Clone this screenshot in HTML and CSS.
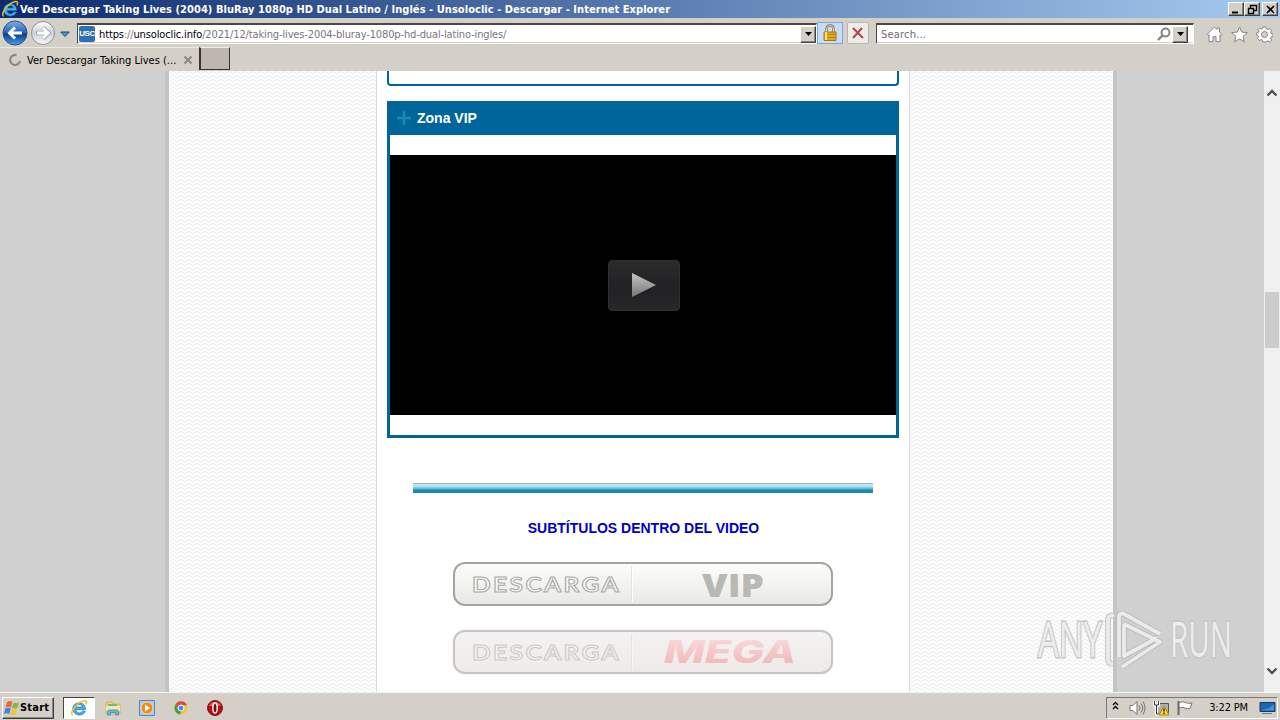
FILE: index.html
```html
<!DOCTYPE html>
<html lang="es">
<head>
  <meta charset="UTF-8">
  <title>Ver Descargar Taking Lives (2004) BluRay 1080p HD Dual Latino / Inglés</title>
  <link rel="stylesheet" href="styles.css">
</head>
<body>
  <svg class="defs" width="0" height="0">
    <defs>
      <linearGradient id="blue" x2="0" y2="1"><stop stop-color="#7db1e6"/><stop offset=".45" stop-color="#2b66bd"/><stop offset=".55" stop-color="#0d3d96"/><stop offset="1" stop-color="#42a5ec"/></linearGradient>
      <linearGradient id="glass" x2="0" y2="1"><stop stop-color="#fff"/><stop offset=".5" stop-color="#cbd2d9"/><stop offset="1" stop-color="#f8fafb"/></linearGradient>
      <linearGradient id="play" x2="0" y2="1"><stop stop-color="#c4c4c4"/><stop offset="1" stop-color="#777"/></linearGradient>
      <linearGradient id="red" x2="0" y2="1"><stop stop-color="#fbdfdf"/><stop offset="1" stop-color="#efb1b3"/></linearGradient>
      <symbol id="ie" viewBox="0 0 18 18">
        <path d="M15.500 10.500H6c.2 4 5.500 4.500 6.500 1.500h2.800C13.800 18 2.800 17.300 2.800 9.800 2.800 2 15.900 1.500 15.500 10.500zM6 8h6.300C12 4.600 6.500 4.600 6 8z" fill="#48afe9" stroke="#1c75bd" stroke-width=".7"/>
        <path d="M2.500 16.500C-1 14 7 3 14.500 1.500c2.500-.3 2.500 2 1.500 4" fill="none" stroke="#f2bd28" stroke-width="1.500"/>
      </symbol>
    </defs>
  </svg>

  <header class="titlebar">
    <svg width="18" height="18"><use href="#ie"/></svg>
    <span class="title">Ver Descargar Taking Lives (2004) BluRay 1080p HD Dual Latino / Inglés - Unsoloclic - Descargar - Internet Explorer</span>
    <div class="window-buttons">
      <span class="win"><svg width="15" height="13"><path d="M3 9.500h6" stroke="#000" stroke-width="2"/></svg></span>
      <span class="win"><svg width="15" height="13"><path d="M5.500 5V2.500h6v5H9M5 2.500h7M3.500 5.500h5v5h-5zM3 5.500h6" fill="none" stroke="#000" stroke-width="1.400"/></svg></span>
      <span class="win close"><svg width="15" height="13"><path d="M4 3l7 7M11 3l-7 7" stroke="#000" stroke-width="1.700"/></svg></span>
    </div>
  </header>

  <nav class="navbar">
    <svg class="arrows" width="56" height="28">
      <circle cx="15" cy="15" r="12" fill="url(#blue)" stroke="#30517f"/>
      <path d="M15 9.500L9.500 15l5.500 5.500M10 15h12" fill="none" stroke="#fff" stroke-width="3"/>
      <circle cx="43" cy="15" r="11.500" fill="url(#glass)" stroke="#8b929a"/>
      <path d="M43 9.500l5.500 5.500-5.500 5.500M49 15H36" fill="none" stroke="#a4abb2" stroke-width="4.500"/>
      <path d="M43 10l5 5-5 5M48 15H37" fill="none" stroke="#fff" stroke-width="3"/>
    </svg>
    <svg class="history" width="10" height="7"><path d="M.8 1h8.400L5 5.500z" fill="#3fa0cf" stroke="#174a72"/></svg>
    <div class="field address">
      <span class="favicon">USC</span>
      <span class="url">https<i>://</i>unsoloclic.info<i>/2021/12/taking-lives-2004-bluray-1080p-hd-dual-latino-ingles/</i></span>
      <span class="drop"><svg width="9" height="6"><path d="M1 1h7L4.500 5z"/></svg></span>
    </div>
    <span class="tool lock"><svg width="16" height="18"><path d="M4.500 9V5q0-3.500 3.500-3.500T11.500 5v4" fill="none" stroke="#83764f" stroke-width="2.400"/><path d="M4.500 9V5q0-3.500 3.500-3.500T11.500 5v4" fill="none" stroke="#ddd7b8"/><path d="M2 8h12v8.500H2z" fill="#e3a91a" stroke="#a97908"/><path d="M2 10.500h12M2 13.500h12" stroke="#b88411"/><path d="M4 8v8" stroke="#f9de79" stroke-width="2"/></svg></span>
    <span class="tool stop"><svg width="14" height="14"><path d="M2 2l10 10M11 2L2 12" stroke="#b2444b" stroke-width="2"/></svg></span>
    <div class="field search">
      <span class="placeholder">Search...</span>
      <svg width="14" height="15"><circle cx="8.500" cy="5.500" r="4" fill="#fff" stroke="#858585" stroke-width="2"/><path d="M5.500 8.500L1 13" stroke="#858585" stroke-width="2.400"/></svg>
      <span class="drop"><svg width="9" height="6"><path d="M1 1h7L4.500 5z"/></svg></span>
    </div>
    <div class="ie-tools">
      <svg width="17" height="17"><path d="M1 8.500L8.500 1 11 3.500V2h2.500v4L16 8.500l-1 1-1-.8v7H10v-5H7v5H3v-7l-1 .8z" fill="#fff" stroke="#868686"/></svg>
      <svg width="17" height="17"><path d="M8.500 1l2.200 5.100 5.600.5-4.200 3.700 1.300 5.500-4.900-2.900-4.900 2.900 1.300-5.500L.7 6.600l5.600-.5z" fill="#fff" stroke="#868686"/></svg>
      <svg width="17" height="17"><path d="M7 1h3l.5 2 1.300.6 1.900-1 1.800 1.900-1 1.800.5 1.300 2 .4v2.500l-2 .5-.5 1.200 1 1.800-1.800 1.900-1.900-1-1.300.6L10 16H7l-.5-2-1.300-.5-1.900 1-1.800-1.900 1-1.800L2 9.600l-1.500-.4V7L2.500 6.400 3 5.200l-1-1.600 1.500-1.500 1.800 1 1.200-.6z" fill="#fff" stroke="#858585"/><circle cx="8.500" cy="8.500" r="3" fill="#d4cfc7" stroke="#858585"/></svg>
    </div>
  </nav>

  <div class="tabs">
    <div class="tab">
      <svg width="14" height="14"><path d="M8.500 2.200A5 5 0 1 0 12 8" fill="none" stroke="#858585" stroke-width="2"/></svg>
      <span class="tab-title">Ver Descargar Taking Lives (...</span>
      <svg width="10" height="10"><path d="M1.500 1.500l7 7M8.500 1.500l-7 7" stroke="#8c8884" stroke-width="2"/></svg>
    </div>
    <div class="new-tab"></div>
  </div>

  <main class="viewport">
    <div class="page">
      <svg class="pattern" width="944" height="621">
        <pattern id="zigzag" width="8" height="4" patternUnits="userSpaceOnUse"><path d="M-1 4l1-1 4-3 4 3 1 1" fill="none" stroke="#ececec"/></pattern>
        <rect width="944" height="621" fill="url(#zigzag)"/>
      </svg>
      <div class="content">
        <div class="box-end"></div>
        <section class="vip">
          <h2><svg width="14" height="14"><path d="M7 0v14M0 7h14" stroke="#168bb6" stroke-width="2.600"/></svg>Zona VIP</h2>
          <div class="video">
            <span class="play"><svg width="26" height="26"><path d="M1 1l24 12L1 25z" fill="url(#play)"/></svg></span>
          </div>
        </section>
        <div class="divider"></div>
        <p class="subtitles">SUBTÍTULOS DENTRO DEL VIDEO</p>
        <a class="download">
          <svg width="379" height="42"><text class="outline" x="18" y="29" textLength="149" lengthAdjust="spacingAndGlyphs">DESCARGA</text><path d="M177.500 3v36" stroke="#e3e4de"/><path d="M178.500 3v36" stroke="#fff"/><text class="vip-text" x="248" y="34" textLength="62" lengthAdjust="spacingAndGlyphs">VIP</text></svg>
        </a>
        <a class="download mega">
          <svg width="379" height="42"><text class="outline" x="18" y="29" textLength="149" lengthAdjust="spacingAndGlyphs">DESCARGA</text><path d="M177.500 3v36" stroke="#e7e3e2"/><path d="M178.500 3v36" stroke="#f8f5f4"/><text class="mega-text" x="210" y="32" textLength="132" lengthAdjust="spacingAndGlyphs">MEGA</text></svg>
        </a>
      </div>
    </div>
    <div class="scrollbar">
      <svg width="12" height="8"><path d="M1.500 6.500L6 2l4.500 4.500" fill="none" stroke="#505050" stroke-width="2.400"/></svg>
      <div class="thumb"></div>
      <svg width="12" height="8"><path d="M1.500 1.500L6 6l4.500-4.500" fill="none" stroke="#505050" stroke-width="2.400"/></svg>
    </div>
    <svg class="watermark" width="208" height="90">
      <g class="mark-text"><text x="3" y="59" textLength="64" lengthAdjust="spacingAndGlyphs">ANY</text><text x="135" y="59" textLength="62" lengthAdjust="spacingAndGlyphs">RUN</text></g>
      <g transform="translate(1 10)">
        <path class="mark-shade" d="M78 8q-6-2-6 4v39q0 5 5 5M83 49V10q0-6 5-4l36 20M88 16v32l33-18M88 16l36 18-38 25"/>
        <path class="mark-line" d="M78 8q-6-2-6 4v39q0 5 5 5M83 49V10q0-6 5-4l36 20M88 16v32l33-18M88 16l36 18-38 25"/>
      </g>
    </svg>
  </main>

  <footer class="taskbar">
    <div class="start">
      <svg width="16" height="16"><path d="M3 2q3-2 5.500 0L7 7.500q-3-1.500-5.500 0z" fill="#e9683c"/><path d="M9.500 2.500q3 1.500 5.500 0L13.500 8q-3 1.300-5.500 0z" fill="#83b94b"/><path d="M1.300 8.500q3-1.500 5.500 0L5.300 14Q3 12.300 0 14z" fill="#4385ce"/><path d="M7.700 9q3 1.500 5.500 0l-1.500 5.500q-3 1.500-5.500 0z" fill="#f4c33a"/></svg>
      <span>Start</span>
    </div>
    <div class="task active"><svg width="18" height="18"><use href="#ie"/></svg></div>
    <div class="task"><svg width="16" height="16"><path d="M1 2h6l1 2h7v10H1z" fill="#ecd07a" stroke="#d5b557"/><path d="M3 4h9v2H3z" fill="#6fba78"/><path d="M1 6h14v5H1z" fill="#f7e6a6"/><path d="M2.500 15v-3q0-2 2-2h7q2 0 2 2v3h-3v-2.500h-5V15z" fill="#67b7df" stroke="#4a98c5"/></svg></div>
    <div class="task"><svg width="16" height="16"><path d="M.5.500h15v15H.5z" fill="#aacbea" stroke="#4f8bc1"/><circle cx="8" cy="8" r="6" fill="#f38a14" stroke="#e8ddca"/><path d="M6 4.500l5 3.500-5 3.500z" fill="#fff"/></svg></div>
    <div class="task"><svg width="14" height="14"><circle cx="7" cy="7" r="6.500" fill="#f3c832"/><path d="M1.200 4A6.500 6.500 0 0 1 13 4.300H7L4.300 8.500z" fill="#db4b3e"/><path d="M1.200 4l4 5.500h2.500L6 13.500A6.500 6.500 0 0 1 1.200 4z" fill="#36a15a"/><circle cx="7" cy="7" r="3" fill="#4c8bea" stroke="#fff"/></svg></div>
    <div class="task"><svg width="16" height="16"><circle cx="8" cy="8" r="7.500" fill="#b80d12" stroke="#7f1718"/><path d="M2 6a6.500 6.500 0 0 1 12 0z" fill="#df5d5b"/><ellipse cx="8" cy="8" rx="2.200" ry="5" fill="#741013" stroke="#fff" stroke-width="1.400"/></svg></div>
    <div class="tray">
      <svg class="chevrons" width="7" height="9"><path d="M1 4l2.500-2.500L6 4M1 8l2.500-2.500L6 8" fill="none" stroke="#000" stroke-width="1.300"/></svg>
      <svg width="17" height="16"><path d="M1 5.500h3l4-4v13l-4-4H1z" fill="#fff" stroke="#777"/><path d="M10 5.500q2 2.500 0 5M12 3.500q3.500 4.500 0 9M14 1.500q4 6.500 0 13" fill="none" stroke="#777"/></svg>
      <svg class="network" width="17" height="16"><path d="M6 3.500h9.500v9H4" fill="#a9b1b8" stroke="#555"/><path d="M1.500 1v4h4V1M3.500 5v9H7" fill="none" stroke="#fff" stroke-width="3"/><path d="M1.500 1v4h4V1M3.500 5v9H7" fill="none" stroke="#333"/><path d="M11 6l5 9H6z" fill="#ffd52a" stroke="#b98500"/><path d="M11 8.500v3M11 12.500v1.500" stroke="#222" stroke-width="1.400"/></svg>
      <svg width="17" height="16"><path d="M2.500 2.500q3-1.500 6 0t6.500.500l-2 5.500q-2.500 1-5-.500t-5.500 0" fill="#fff" stroke="#777"/><path d="M1.500 1v14" stroke="#666" stroke-width="2"/></svg>
      <span class="clock">3:22 PM</span>
      <svg width="17" height="14"><path d="M1 1.500h15v9H1z" fill="#1e63b4" stroke="#17375e"/><path d="M2 9q9-1 13-6v6.500H2z" fill="#3e93db"/><path d="M3 12.500h10" stroke="#6f8193"/></svg>
    </div>
  </footer>
</body>
</html>
```
FILE: styles.css
```css
* {
  box-sizing: border-box;
}
body {
  margin: 0;
  width: 1280px;
  height: 720px;
  overflow: hidden;
  display: flex;
  flex-direction: column;
  background: #d4cfc7;
  font-family: "DejaVu Sans Condensed", "DejaVu Sans", sans-serif;
  font-size: 11px;
  color: #000;
}
svg {
  display: block;
  flex: none;
}
.defs {
  position: absolute;
}

/* window chrome */
.titlebar {
  height: 18px;
  display: flex;
  align-items: center;
  padding: 0 2px 0 1px;
  background: linear-gradient(90deg, #0c2a6c, #a6caf0);
}
.title {
  flex: 1;
  white-space: nowrap;
  margin-left: 1px;
  color: #fff;
  font-size: 11px;
  font-weight: bold;
  letter-spacing: 0.05px;
}
.window-buttons {
  display: flex;
}
.win,
.drop {
  display: flex;
  align-items: center;
  justify-content: center;
  background: #d4cfc7;
  border: 1px solid;
  border-color: #fff #404040 #404040 #fff;
  box-shadow: inset -1px -1px #888;
}
.win {
  width: 16px;
  height: 14px;
}
.close {
  margin-left: 2px;
}
.navbar {
  height: 29px;
  display: flex;
  align-items: flex-start;
}
.history {
  margin: 13px 7px 0 4px;
}
.field {
  height: 21px;
  margin-top: 5px;
  display: flex;
  align-items: center;
  background: #fff;
  border: 1px solid #fff;
  border-top: 2px solid #4b4745;
  border-left-color: #4b4745;
  box-shadow: inset 0 -1px #d4cfc7;
}
.address {
  width: 740px;
  padding-left: 1px;
}
.favicon {
  width: 16px;
  height: 16px;
  border-radius: 2px;
  background: #2f6fb3;
  color: #fff;
  font: bold 8px/16px "Liberation Sans", sans-serif;
  letter-spacing: -0.5px;
  text-align: center;
}
.url {
  flex: 1;
  margin-left: 4px;
  letter-spacing: -0.13px;
}
.url i {
  font-style: normal;
  color: #777;
}
.drop {
  width: 16px;
  height: 17px;
}
.tool {
  height: 22px;
  margin-top: 4px;
  display: flex;
  align-items: center;
  justify-content: center;
  border: 1px solid #79a8df;
}
.lock {
  width: 26px;
  background: #c5ddf7;
}
.stop {
  width: 22px;
  margin-left: 4px;
  background: #eeecea;
  border-color: #b9b5b0;
  border-radius: 2px;
}
.search {
  width: 318px;
  margin-left: 7px;
  padding-right: 5px;
}
.search .drop {
  margin-left: 1px;
}
.placeholder {
  flex: 1;
  margin-left: 4px;
  color: #6d6d6d;
  letter-spacing: 0.2px;
}
.ie-tools {
  display: flex;
  gap: 8px;
  margin: 8px 0 0 12px;
}
.tabs {
  height: 24px;
  display: flex;
}
.tab {
  width: 199px;
  display: flex;
  align-items: center;
  padding: 1px 6px 0 8px;
  border-top: 1px solid #ece8e3;
}
.tab-title {
  flex: 1;
  margin-left: 5px;
  white-space: nowrap;
}
.new-tab {
  width: 31px;
  height: 23px;
  background: #bdb6b1;
  border: 1px solid #333;
  border-left-width: 2px;
  border-top-color: #eee;
}

/* web page */
.viewport {
  height: 621px;
  display: flex;
  position: relative;
  background: #d0d0d0;
}
.page {
  width: 952px;
  margin: 0 147px 0 165px;
  position: relative;
  display: flex;
  justify-content: center;
  border: solid #c4c4c4;
  border-width: 0 4px;
  background: #fcfcfc;
}
.pattern {
  position: absolute;
  inset: 0;
}
.content {
  position: relative;
  width: 534px;
  margin-left: 4px;
  padding: 0 10px;
  display: flex;
  flex-direction: column;
  align-items: center;
  background: #fff;
  border: solid #dadada;
  border-width: 0 1px;
}
.box-end {
  width: 512px;
  height: 15px;
  border: 2px solid #006699;
  border-top: 0;
  border-radius: 0 0 4px 4px;
}
.vip {
  width: 512px;
  height: 337px;
  margin-top: 15px;
  border: 3px solid #006699;
}
.vip h2 {
  height: 31px;
  margin: 0;
  padding: 0 0 3px 7px;
  display: flex;
  align-items: center;
  gap: 6px;
  background: #006699;
  color: #fff;
  font: bold 14px "Liberation Sans", Arial, sans-serif;
}
.video {
  height: 260px;
  margin-top: 20px;
  display: flex;
  align-items: center;
  justify-content: center;
  background: #000;
}
.play {
  width: 72px;
  height: 51px;
  margin-left: 1px;
  display: flex;
  align-items: center;
  justify-content: center;
  border-radius: 4px;
  border: 1px solid #303030;
  background: linear-gradient(#2b2b2b, #222225 50%, #272728);
}
.divider {
  width: 460px;
  height: 10px;
  margin-top: 45px;
  background: linear-gradient(#9fb9bd 0 1px, #c0e2e9 1px 3px, #9bd4e5 4px, #50b5d5 6px, #178cad 7px 10px);
}
.subtitles {
  margin: 27px 0 0 1px;
  color: #0000c8;
  font: bold 14px/16px "Liberation Sans", Arial, sans-serif;
}
.download {
  width: 380px;
  height: 44px;
  margin-top: 26px;
  border: 2px solid #a4a59f;
  border-radius: 12px;
  background: linear-gradient(#fdfefa, #e8e9e4);
}
.download svg {
  margin: -1px 0 0 -1px;
}
.mega {
  margin-top: 24px;
  border-color: #c7c4c3;
  background: linear-gradient(#f5f3f2, #edeae8);
  box-shadow: 0 0 3px #eee;
}
.outline {
  font: bold 21px Lato, sans-serif;
  letter-spacing: 2px;
  fill: #f7f8f4;
  stroke: #aaaba6;
  stroke-width: 1px;
}
.mega .outline {
  fill: #f3f0ef;
  stroke: #cecac8;
}
.vip-text {
  font: 800 31px "Open Sans", sans-serif;
  fill: #b8b9b4;
}
.mega-text {
  font: italic 800 31px Inter, sans-serif;
  fill: url(#red);
}
.scrollbar {
  width: 16px;
  display: flex;
  flex-direction: column;
  align-items: center;
  justify-content: space-between;
  padding: 18px 0 17px;
  background: #f0f0f0;
}
.thumb {
  width: 14px;
  height: 56px;
  margin-bottom: 124px;
  background: #cdcdcd;
}
.watermark {
  position: absolute;
  left: 1035px;
  top: 527px;
}
.mark-text {
  font: 49px "Open Sans", sans-serif;
  fill: #ededed;
  stroke: #c6c6c6;
  stroke-width: 3px;
  paint-order: stroke;
}
.mark-shade,
.mark-line {
  fill: none;
  stroke: #b9b9b9;
  stroke-width: 5.5px;
  stroke-linejoin: round;
}
.mark-line {
  stroke: #ebebeb;
  stroke-width: 3.8px;
}

/* taskbar */
.taskbar {
  height: 28px;
  display: flex;
  align-items: center;
  padding: 2px 2px 0;
  border-top: 1px solid #f5f3f0;
}
.start {
  width: 52px;
  height: 22px;
  margin-right: 9px;
  display: flex;
  align-items: center;
  padding-left: 1px;
  font-weight: bold;
  letter-spacing: 0.2px;
  border: 1px solid;
  border-color: #fff #404040 #404040 #fff;
  box-shadow: inset -1px -1px #888;
}
.task {
  width: 34px;
  height: 22px;
  display: flex;
  align-items: center;
  justify-content: center;
}
.active {
  width: 32px;
  margin-right: 1px;
  background: #fff;
  border: 1px solid #fff;
  border-top-color: #444;
  border-left-color: #444;
}
.tray {
  width: 172px;
  height: 22px;
  margin-left: auto;
  padding: 0 1px 0 5px;
  display: flex;
  align-items: center;
  border: 1px solid #fff;
  border-top-color: #777;
  border-left-color: #777;
}
.chevrons {
  margin: 0 10px 4px 0;
}
.network {
  margin: 0 7px;
}
.clock {
  margin: 0 11px 0 auto;
  letter-spacing: -0.15px;
}
```
